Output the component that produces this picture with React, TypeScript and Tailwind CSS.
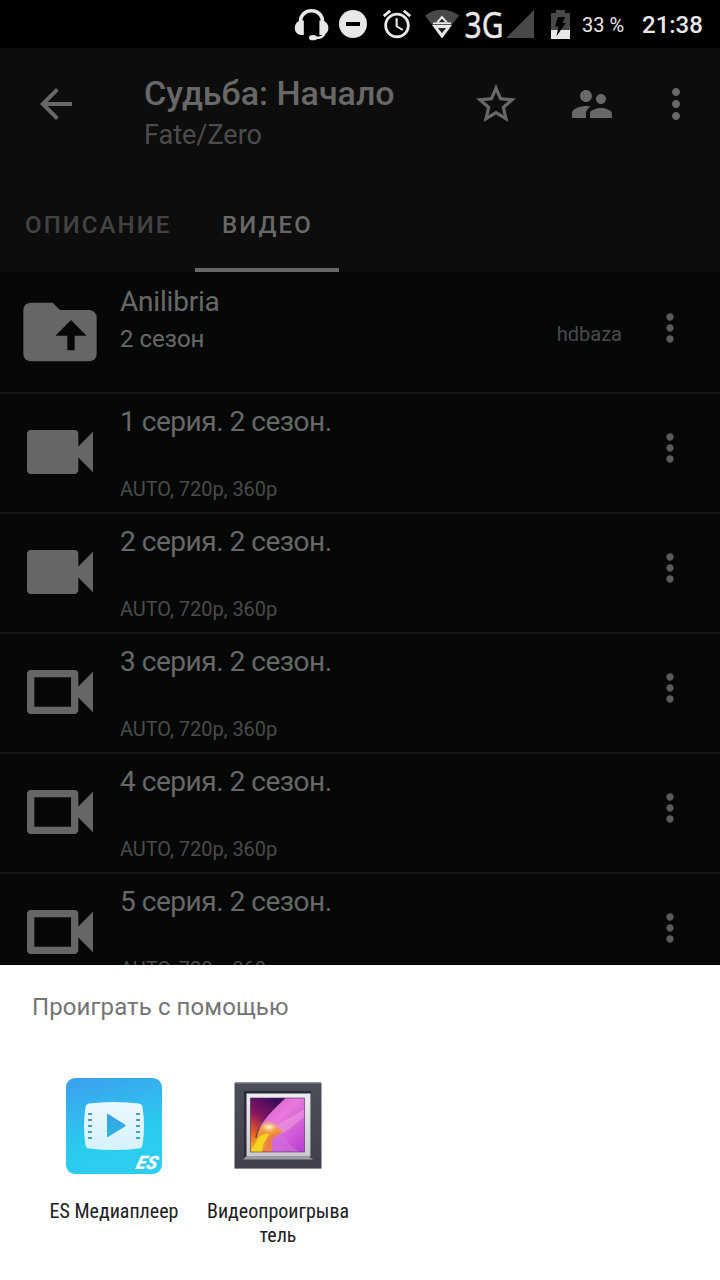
import type { ReactNode } from 'react';

interface Episode {
  title: string;
  watched: boolean;
}

const episodes: Episode[] = [
  { title: '1 серия. 2 сезон.', watched: true },
  { title: '2 серия. 2 сезон.', watched: true },
  { title: '3 серия. 2 сезон.', watched: false },
  { title: '4 серия. 2 сезон.', watched: false },
  { title: '5 серия. 2 сезон.', watched: false },
];

const ICONS = {
  back: 'M20 11H7.83l5.59-5.59L12 4l-8 8 8 8 1.41-1.41L7.83 13H20v-2z',
  star: 'M22 9.24l-7.19-.62L12 2 9.19 8.63 2 9.24l5.46 4.73L5.82 21 12 17.27 18.18 21l-1.63-7.03L22 9.24zM12 15.4l-3.76 2.27 1-4.28-3.32-2.88 4.38-.38L12 6.1l1.71 4.04 4.38.38-3.32 2.88 1 4.28L12 15.4z',
  people:
    'M16.5 12c1.38 0 2.49-1.12 2.49-2.5S17.88 7 16.5 7C15.12 7 14 8.12 14 9.5s1.12 2.5 2.5 2.5zM9 11c1.66 0 2.99-1.34 2.99-3S10.66 5 9 5C7.34 5 6 6.34 6 8s1.34 3 3 3zm7.5 3c-1.83 0-5.5.92-5.5 2.75V19h11v-2.25c0-1.83-3.67-2.75-5.5-2.75zM9 13c-2.33 0-7 1.17-7 3.5V19h7v-2.25c0-.85.33-2.34 2.37-3.47C10.5 13.1 9.66 13 9 13z',
  more: 'M12 8c1.1 0 2-.9 2-2s-.9-2-2-2-2 .9-2 2 .9 2 2 2zm0 2c-1.1 0-2 .9-2 2s.9 2 2 2 2-.9 2-2-.9-2-2-2zm0 6c-1.1 0-2 .9-2 2s.9 2 2 2 2-.9 2-2-.9-2-2-2z',
  folderUp:
    'M20 6a2 2 0 0 1 2 2v10a2 2 0 0 1-2 2H4a2 2 0 0 1-2-2V6a2 2 0 0 1 2-2h6l2 2h8zM10.75 13H14v4h2v-4h3.25L15 8.75z',
  videoFull:
    'M17 10.5V7c0-.55-.45-1-1-1H4c-.55 0-1 .45-1 1v10c0 .55.45 1 1 1h12c.55 0 1-.45 1-1v-3.5l4 4v-11l-4 4z',
  videoEmpty:
    'M15 8v8H5V8h10m1-2H4c-.55 0-1 .45-1 1v10c0 .55.45 1 1 1h12c.55 0 1-.45 1-1v-3.5l4 4v-11l-4 4V7c0-.55-.45-1-1-1z',
  alarm:
    'M22 5.72l-4.6-3.86-1.29 1.53 4.6 3.86L22 5.72zM7.88 3.39L6.6 1.86 2 5.71l1.29 1.53 4.59-3.85zM12.5 8H11v6l4.75 2.85.75-1.23-4-2.37V8zM12 4c-4.97 0-9 4.03-9 9s4.02 9 9 9c4.97 0 9-4.03 9-9s-4.03-9-9-9zm0 16c-3.87 0-7-3.13-7-7s3.13-7 7-7 7 3.13 7 7-3.13 7-7 7z',
};

const Icon = ({ name, className }: { name: keyof typeof ICONS; className: string }) => (
  <svg viewBox="0 0 24 24" className={`shrink-0 ${className}`} fill="currentColor" fillRule="evenodd">
    <path d={ICONS[name]} />
  </svg>
);

const StatusBar = () => (
  <div className="h-12 shrink-0 bg-black text-[#e8e8e8] flex items-center pl-[294px]">
    {/* headset */}
    <svg viewBox="0 0 36 48" className="w-9 h-12 shrink-0" fill="currentColor">
      <path d="M6.500 22C6 7 29 7 28.500 22" fill="none" stroke="currentColor" strokeWidth="3.600" />
      <path d="M9.800 20.500v14.400C4 35.600 0.800 32.500 0.800 27.900S4 20 9.800 20.500z" />
      <path d="M25.400 20.500v14.400c5.600.7 9-2.400 9-7s-3.400-7.900-9-7.400z" />
      <path d="M30.500 33c-1 4.200-4 5.200-11 4.800" fill="none" stroke="currentColor" strokeWidth="2.600" />
      <ellipse cx="19" cy="37.700" rx="4" ry="2.600" />
    </svg>
    {/* do not disturb */}
    <svg viewBox="0 0 28 28" className="w-7 h-7 ml-[9px] shrink-0">
      <circle cx="14" cy="14" r="14" fill="currentColor" />
      <rect x="7" y="12" width="14" height="4" fill="black" />
    </svg>
    <Icon name="alarm" className="w-[34px] h-[34px] ml-[13px]" />
    {/* wifi with data arrows */}
    <svg viewBox="0 0 34 48" className="w-[34px] h-12 ml-[11px] shrink-0">
      <path d="M0 15.500C10 7.700 24 7.700 34 15.500L17 38z" fill="#484848" />
      <path d="M17 15.500L11 22.500h12zM7 25h20L17 38.500z" fill="#e8e8e8" />
      <path d="M8 23.300h18" stroke="#e8e8e8" strokeWidth="1.600" />
      <path d="M17 18.800l3 3.200h-6zM13 28h8l-4 5.200z" fill="#222" />
    </svg>
    <svg viewBox="0 0 40 48" className="w-10 h-12 ml-[5px] shrink-0 overflow-visible" fill="currentColor">
      <text x="0.500" y="38" textLength="39" lengthAdjust="spacingAndGlyphs" stroke="currentColor" strokeWidth="0.400" className="font-['Noto_Sans',sans-serif] text-[37px]">
        3G
      </text>
    </svg>
    <svg viewBox="0 0 28 28" className="w-7 h-7 ml-[2px] shrink-0">
      <path d="M28 0v28H0z" fill="#484848" />
    </svg>
    {/* battery */}
    <svg viewBox="0 0 19 29" className="w-[19px] h-[29px] ml-[17px] shrink-0">
      <path d="M5 0h9v3h5v26H0V3h5z" fill="#484848" />
      <path d="M0 20h19v9H0z" fill="#e8e8e8" />
      <path d="M7 7h7l-2.500 6H15L5.500 26l2-9.500H4z" fill="#000" />
    </svg>
    <span className="ml-3 w-[60px] mt-[2px] text-[20px] leading-6 whitespace-nowrap">33 %</span>
    <span className="text-[24px] leading-6 mt-[1px] font-medium">21:38</span>
  </div>
);

const Toolbar = () => (
  <div className="h-56 shrink-0 bg-[#0d0d0d] text-[#686868] flex flex-col justify-between">
    <div className="h-28 flex items-center pl-8 pr-5">
      <Icon name="back" className="size-12" />
      <div className="flex-1 pl-16 pt-[20px]">
        <h1 className="text-[34px] leading-[41px] font-medium whitespace-nowrap">Судьба: Начало</h1>
        <h2 className="text-[27px] leading-[42px] text-[#4c4c4c]">Fate/Zero</h2>
      </div>
      <Icon name="star" className="size-12" />
      <Icon name="people" className="size-12 ml-12" />
      <Icon name="more" className="size-12 ml-9" />
    </div>
    <div className="h-24 flex text-[24px] font-medium tracking-[2.1px]">
      <div className="w-[195px] pl-[25px] pt-0.5 flex items-center text-[#434343]">ОПИСАНИЕ</div>
      <div className="w-36 pl-[27px] pt-1.5 flex items-center border-b-4 border-[#686868]">ВИДЕО</div>
    </div>
  </div>
);

const Row = ({ icon, children }: { icon: keyof typeof ICONS; children: ReactNode }) => (
  <div className="h-[120px] shrink-0 flex items-center pl-4 pr-7 shadow-[0_2px_0_#161818]">
    <Icon name={icon} className="size-[88px] text-[#666]" />
    <div className="flex-1 h-full ml-4 flex">{children}</div>
    <Icon name="more" className="size-11 mb-2 text-[#5a5a5a]" />
  </div>
);

const VideoList = () => (
  <div className="flex-1 min-h-0 overflow-hidden bg-[#060807] text-[#686868] flex flex-col">
    <Row icon="folderUp">
      <div className="flex-1 pt-3">
        <p className="text-[28px] leading-9 tracking-[-0.2px]">Anilibria</p>
        <p className="text-[24px] leading-9 pt-[1px]">2 сезон</p>
      </div>
      <span className="self-center mt-1 mr-[26px] text-[20px] text-[#4a4a4a]">hdbaza</span>
    </Row>
    {episodes.map(({ title, watched }) => (
      <Row key={title} icon={watched ? 'videoFull' : 'videoEmpty'}>
        <div className="flex flex-col justify-between pt-3 pb-[11px]">
          <p className="text-[28px] leading-9 tracking-[-0.47px]">{title}</p>
          <p className="text-[20px] leading-6 tracking-[-0.05px] text-[#4a4a4a]">AUTO, 720p, 360p</p>
        </div>
      </Row>
    ))}
  </div>
);

const EsPlayerIcon = () => (
  <svg viewBox="0 0 96 96" className="size-24">
    <defs>
      <linearGradient id="es-bg" x1="0" y1="0" x2="0.300" y2="1">
        <stop offset="0" stopColor="#3c9eef" />
        <stop offset="0.700" stopColor="#2bcbee" />
        <stop offset="1" stopColor="#2dcdf0" />
      </linearGradient>
      <linearGradient id="es-play" x1="0" y1="0" x2="0" y2="1">
        <stop offset="0" stopColor="#389fe6" />
        <stop offset="1" stopColor="#2cb8e0" />
      </linearGradient>
      <linearGradient id="es-film" x1="0" y1="0" x2="0" y2="1">
        <stop offset="0" stopColor="#edf8fe" />
        <stop offset="1" stopColor="#d5f3fb" />
      </linearGradient>
    </defs>
    <rect width="96" height="96" rx="9" fill="url(#es-bg)" />
    <path
      d="M23 25.500Q48 22.500 73 25.500Q76 26 76.500 29Q79.500 48 76.500 67Q76 70 73 70.500Q48 73.500 23 70.500Q20 70 19.500 67Q16.500 48 19.500 29Q20 26 23 25.500z"
      fill="url(#es-film)"
    />
    <path d="M24 35v29M72 35v29" stroke="#4a9fc4" strokeWidth="4" strokeDasharray="2 4" />
    <path d="M41 36.500Q41 35.500 42 36L59 46.500Q60 47.500 59 48.500L42 59Q41 59.500 41 58.500z" fill="url(#es-play)" />
    <text
      x="0"
      y="0"
      transform="translate(69 91) skewX(-16)"
      textLength="21"
      lengthAdjust="spacingAndGlyphs"
      fill="white"
      className="font-[Roboto,sans-serif] text-[18.5px] font-black italic"
    >
      ES
    </text>
  </svg>
);

const GalleryIcon = () => (
  <svg viewBox="0 0 96 96" className="size-24">
    <defs>
      <linearGradient id="frame" x1="0" y1="0" x2="0" y2="1">
        <stop offset="0" stopColor="#4c4e59" />
        <stop offset="1" stopColor="#3f404b" />
      </linearGradient>
      <linearGradient id="mat" x1="0" y1="0" x2="0" y2="1">
        <stop offset="0" stopColor="#ececee" />
        <stop offset="1" stopColor="#c9cacd" />
      </linearGradient>
      <linearGradient id="pink" x1="0" y1="0" x2="1" y2="1">
        <stop offset="0" stopColor="#d44bc8" />
        <stop offset="0.450" stopColor="#e879dc" />
        <stop offset="1" stopColor="#b43ccf" />
      </linearGradient>
      <linearGradient id="dusk" x1="0.600" y1="0" x2="0.200" y2="1">
        <stop offset="0" stopColor="#3b0b5e" />
        <stop offset="0.400" stopColor="#8a1660" />
        <stop offset="0.700" stopColor="#e05a25" />
        <stop offset="1" stopColor="#f7c01c" />
      </linearGradient>
      <radialGradient id="glow">
        <stop offset="0" stopColor="#fff6d8" />
        <stop offset="0.400" stopColor="#fbc98a" stopOpacity="0.800" />
        <stop offset="1" stopColor="#f58a5a" stopOpacity="0" />
      </radialGradient>
      <clipPath id="photo">
        <rect x="20.500" y="20" width="54" height="54" />
      </clipPath>
    </defs>
    <rect x="4.500" y="4.500" width="87" height="86.500" rx="1" fill="url(#frame)" />
    <path d="M5 5.200h86" stroke="#777983" strokeWidth="1.200" />
    <path d="M5 90.500h86" stroke="#888993" strokeWidth="1" />
    <rect x="14" y="13" width="67" height="68" fill="#292b3b" />
    <path d="M13 81.500l3-3h63l4 3z" fill="#9a9ba3" />
    <rect x="16.500" y="15.500" width="64" height="63" fill="url(#mat)" />
    <g clipPath="url(#photo)">
      <rect x="20" y="20" width="55" height="55" fill="url(#pink)" />
      <path d="M75 31C62 39 52 43 44 50l-2 11c12-5 22-14 33-22z" fill="#f7a7df" opacity="0.450" />
      <path d="M20 20h35C43 32 29 43 26 60l-1 15h-5z" fill="url(#dusk)" />
      <path d="M26 59C28 50 34 44 43 48c7 2 8 5 10 6L42 61v14H21z" fill="#ef9b35" />
      <path d="M20 74l10-16 9-3-7 20z" fill="#f8d51d" />
      <path d="M32 75c0-12 5-18 20-22-7 7-10 13-10 22z" fill="#e46a5c" opacity="0.500" />
      <path d="M55 20C43 31 29 43 26 60" fill="none" stroke="#3a1648" strokeWidth="1.200" opacity="0.700" />
      <ellipse cx="39" cy="49" rx="11" ry="7" fill="url(#glow)" />
      <path d="M42 75V61l11-7c3 10 10 17 19 21z" fill="#cf6be0" opacity="0.750" />
    </g>
    <rect x="20.500" y="20" width="54" height="54" fill="none" stroke="#4b2456" strokeWidth="0.800" opacity="0.700" />
  </svg>
);

const AppChoice = ({ icon, children }: { icon: ReactNode; children: ReactNode }) => (
  <div className="w-[164px] flex flex-col items-center">
    {icon}
    <p className="mt-[25px] text-[20px] leading-6 text-center whitespace-nowrap text-[#212121] font-['Roboto_Condensed',Roboto,sans-serif]">
      {children}
    </p>
  </div>
);

const OpenWithSheet = () => (
  <div className="h-[315px] shrink-0 bg-white">
    <p className="pl-8 pt-[26px] text-[24px] leading-8 tracking-[0.08px] text-[#757575]">Проиграть с помощью</p>
    <div className="flex pl-8 pt-[55px]">
      <AppChoice icon={<EsPlayerIcon />}>ES Медиаплеер</AppChoice>
      <AppChoice icon={<GalleryIcon />}>
        Видеопроигрыва
        <br />
        тель
      </AppChoice>
    </div>
  </div>
);

const App = () => {
  return (
    <div className="w-[720px] h-[1280px] overflow-hidden flex flex-col bg-black font-[Roboto,sans-serif]">
      <StatusBar />
      <Toolbar />
      <VideoList />
      <OpenWithSheet />
    </div>
  );
};

export default App;
